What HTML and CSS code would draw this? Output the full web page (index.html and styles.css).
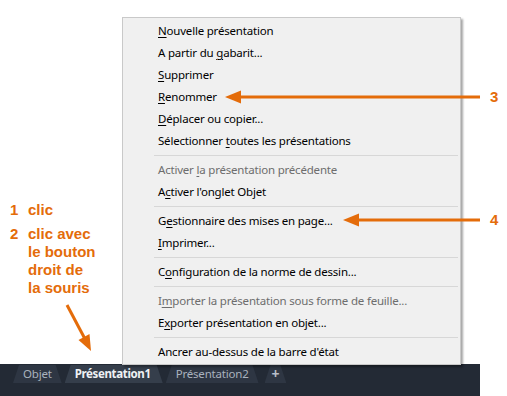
FILE: index.html
```html
<!DOCTYPE html>
<html lang="fr">
<head>
  <meta charset="UTF-8">
  <title>Menu contextuel des présentations</title>
  <link rel="stylesheet" href="styles.css">
</head>
<body>
  <div class="stage">
    <div class="notes">
      <div class="note"><span class="num">1</span><span>clic</span></div>
      <div class="note"><span class="num">2</span><span>clic avec<br>le bouton<br>droit de<br>la souris</span></div>
    </div>

    <ul class="menu">
      <li class="item"><u>N</u>ouvelle présentation</li>
      <li class="item">A partir du <u>g</u>abarit...</li>
      <li class="item"><u>S</u>upprimer</li>
      <li class="item"><u>R</u>enommer</li>
      <li class="item"><u>D</u>éplacer ou copier...</li>
      <li class="item">Sélectionner <u>t</u>outes les présentations</li>
      <li class="sep"></li>
      <li class="item off">Activer <u>l</u>a présentation précédente</li>
      <li class="item">A<u>c</u>tiver l'onglet Objet</li>
      <li class="sep"></li>
      <li class="item">G<u>e</u>stionnaire des mises en page...</li>
      <li class="item"><u>I</u>mprimer...</li>
      <li class="sep"></li>
      <li class="item">C<u>o</u>nfiguration de la norme de dessin...</li>
      <li class="sep"></li>
      <li class="item off">I<u>m</u>porter la présentation sous forme de feuille...</li>
      <li class="item">E<u>x</u>porter présentation en objet...</li>
      <li class="sep"></li>
      <li class="item">Ancrer au-dessus de la barre d'état</li>
    </ul>

    <svg class="arrows" width="507" height="364" viewBox="0 0 507 364">
      <g fill="#e46c0a" stroke="#e46c0a">
        <line x1="238" y1="97" x2="480" y2="97" stroke-width="3"/>
        <polygon points="225,97 241,90.5 241,103.5" stroke="none"/>
        <line x1="356" y1="220" x2="480" y2="220" stroke-width="3"/>
        <polygon points="343,220 359,213.5 359,226.5" stroke="none"/>
        <line x1="67" y1="305" x2="85" y2="339" stroke-width="3"/>
        <polygon points="91,351 89.5,334 78.5,340" stroke="none"/>
      </g>
    </svg>
    <span class="callout c3">3</span>
    <span class="callout c4">4</span>
  </div>

  <div class="tabbar">
    <div class="tab">Objet</div>
    <div class="tab active">Présentation1</div>
    <div class="tab">Présentation2</div>
    <div class="tab plus">+</div>
  </div>
</body>
</html>
```

FILE: styles.css
```css
* {
  box-sizing: border-box;
}

html, body {
  margin: 0;
  padding: 0;
  width: 507px;
  height: 396px;
  overflow: hidden;
  background: #fff;
  font-family: "Segoe UI", "Noto Sans", sans-serif;
}

.stage {
  position: relative;
  height: 364px;
}

/* left annotation */
.notes {
  position: absolute;
  left: 10px;
  top: 201px;
  color: #e46c0a;
  font-family: "Liberation Sans", Arial, sans-serif;
  font-weight: bold;
  font-size: 15px;
  line-height: 18px;
}

.note {
  display: flex;
  margin-bottom: 6px;
}

.note .num {
  width: 18px;
}

/* context menu */
.menu {
  position: absolute;
  left: 122px;
  top: 17px;
  width: 339px;
  height: 348px;
  margin: 0;
  padding: 2px 2px 1px 2px;
  list-style: none;
  background: #f0f0f0;
  border: 1px solid #c9c9c9;
  box-shadow: 2px 2px 2px rgba(0, 0, 0, 0.35);
  z-index: 2;
}

.item {
  height: 22px;
  line-height: 22px;
  padding-left: 33px;
  font-size: 11.5px;
  letter-spacing: -0.2px;
  color: #000;
  white-space: nowrap;
}

.item u {
  text-decoration: underline;
  text-underline-offset: 2px;
}

.item.off {
  color: #6d6d6d;
}

.sep {
  height: 7px;
  margin-left: 29px;
  border-bottom: 1px solid #d7d7d7;
  transform: translateY(-3px);
}

.arrows {
  position: absolute;
  left: 0;
  top: 0;
  z-index: 3;
}

.callout {
  position: absolute;
  left: 490px;
  color: #e46c0a;
  font-family: "Liberation Sans", Arial, sans-serif;
  font-weight: bold;
  font-size: 15px;
  line-height: 16px;
}

.c3 { top: 89px; }
.c4 { top: 212px; }

/* layout tabs */
.tabbar {
  display: flex;
  align-items: flex-start;
  width: 480px;
  height: 32px;
  padding: 1px 0 0 13px;
  background: #232a35;
}

.tab {
  height: 18px;
  line-height: 17px;
  padding: 0 10px;
  margin-right: 3px;
  font-size: 11.5px;
  letter-spacing: -0.2px;
  color: #a9b2be;
  background: #2e3643;
  clip-path: polygon(6px 0, calc(100% - 6px) 0, 100% 100%, 0 100%);
}

.tab.active {
  color: #eef1f4;
  font-weight: bold;
  letter-spacing: -0.35px;
  background: #353e4b;
  padding-right: 12px;
}

.tab.plus {
  margin-left: 3px;
  padding: 0 7px;
  font-weight: bold;
  font-size: 14px;
  color: #b7bec8;
}
```
